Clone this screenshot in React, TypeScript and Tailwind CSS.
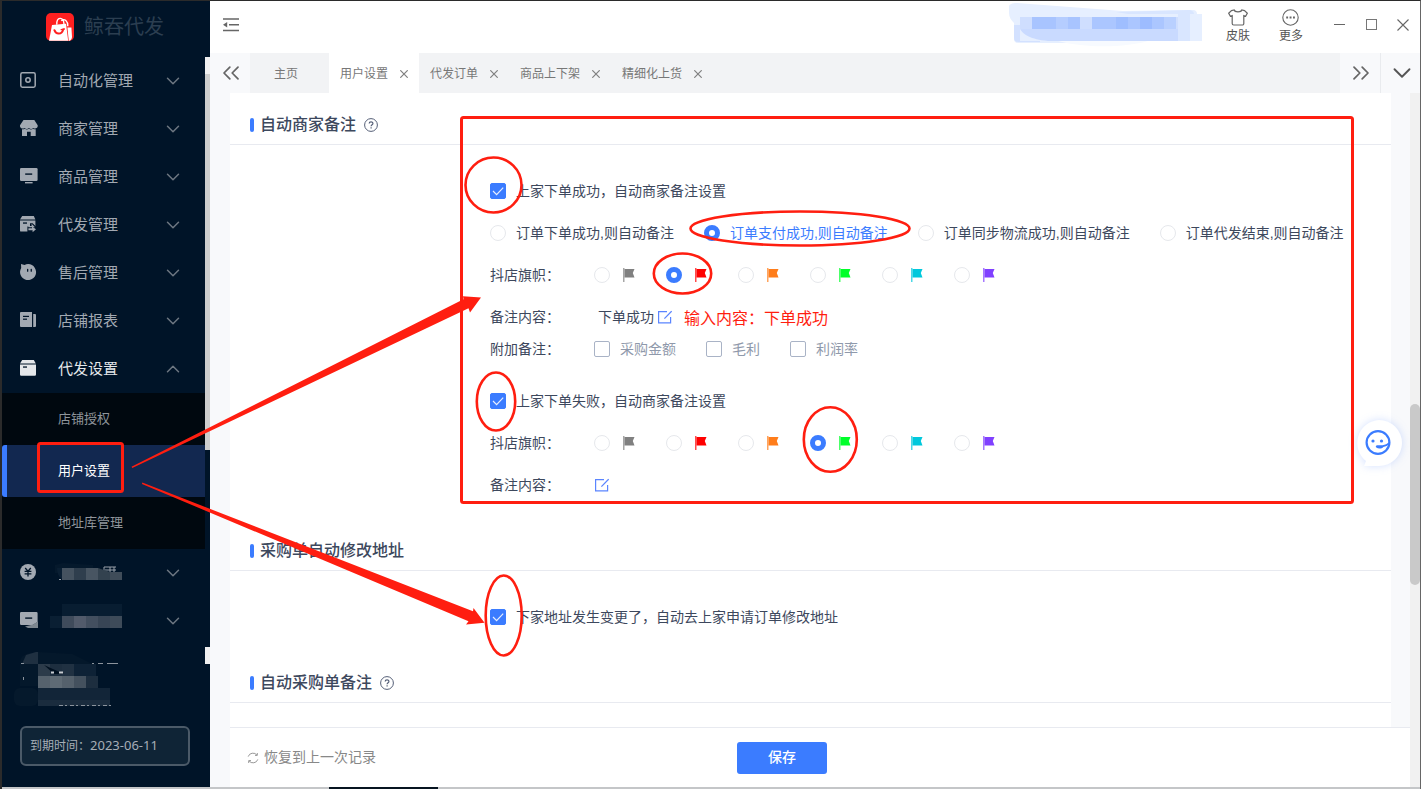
import React from "react";
import { ChevronDown, ChevronUp, ChevronsLeft, ChevronsRight } from "lucide-react";

const FLAGS = [
  { name: "灰", color: "#808080" },
  { name: "红", color: "#ff0000" },
  { name: "橙", color: "#ff7d1a" },
  { name: "绿", color: "#00ff2a" },
  { name: "青", color: "#00c8dc" },
  { name: "紫", color: "#8040ff" },
];

const TIMINGS = [
  "订单下单成功,则自动备注",
  "订单支付成功,则自动备注",
  "订单同步物流成功,则自动备注",
  "订单代发结束,则自动备注",
];

const EXTRAS = ["采购金额", "毛利", "利润率"];
const TABS = ["用户设置", "代发订单", "商品上下架", "精细化上货"];
const SUB_ITEMS = ["店铺授权", "用户设置", "地址库管理"];

/* ---------- sidebar icons ---------- */

function IconFrame({ children }: { children: React.ReactNode }) {
  return (
    <svg width="18" height="18" viewBox="0 0 18 18" className="shrink-0" fill="currentColor" aria-hidden="true">
      {children}
    </svg>
  );
}

const HOLE = "#001428";

const AutomationIcon = () => (
  <IconFrame>
    <rect x="0.8" y="0.8" width="14.4" height="14.4" rx="1.6" fill="none" stroke="currentColor" strokeWidth="1.5" />
    <circle cx="8" cy="8" r="2.2" fill="none" stroke="currentColor" strokeWidth="1.5" />
  </IconFrame>
);

const ShopIcon = () => (
  <IconFrame>
    <path d="M3.5 0h10.8l3.4 5.2v1.2a2.9 2.9 0 0 1-4.4 1.6 3.1 3.1 0 0 1-4.4 0 3.1 3.1 0 0 1-4.4 0A2.9 2.9 0 0 1 0 6.4V5.2z" />
    <path d="M2 9.2c1.1.3 2 .1 2.8-.4 1.4.8 2.8.8 4.1 0 1.4.8 2.8.8 4.2 0 .8.5 1.7.7 2.6.4V16h-5v-4.300H7V16H2z" />
  </IconFrame>
);

const GoodsIcon = () => (
  <IconFrame>
    <rect x="0" y="0" width="17.6" height="13" rx="1.2" />
    <rect x="5.2" y="5.4" width="7" height="1.4" fill={HOLE} />
    <rect x="5" y="14" width="7.6" height="1.4" />
  </IconFrame>
);

const BoxIcon = () => (
  <IconFrame>
    <path d="M2.2 0h11.6l2 3.400H0z" />
    <path d="M0 4.600h16v10a1.200 1.200 0 0 1-1.200 1.200H1.200A1.200 1.200 0 0 1 0 14.600z" />
    <rect x="3" y="6.4" width="4" height="1.3" fill={HOLE} />
  </IconFrame>
);

const ShipIcon = () => (
  <IconFrame>
    <path d="M2.2 0h11.6l1.6 3.400H0z" />
    <path d="M0 4.600h15.400v11H1.200A1.200 1.200 0 0 1 0 14.400z" />
    <rect x="3" y="6.4" width="4" height="1.3" fill={HOLE} />
    <path d="M7.400 10.400H10V7.200h2.600L16 10.500V16H7.400z" fill={HOLE} />
    <path d="M11.600 7.800L15 11.200H8.400V10h3.200z" />
    <path d="M8.400 12.200H12V10.600l4 2.600-3.400 3V14.200H8.400z" />
  </IconFrame>
);

const FaceIcon = () => (
  <IconFrame>
    <path d="M1 0l3.6.9A8 8 0 1 1 1.200 4z" />
    <rect x="7" y="4.8" width="1.3" height="3" rx="0.6" fill={HOLE} />
    <rect x="10.6" y="4.8" width="1.3" height="3" rx="0.6" fill={HOLE} />
  </IconFrame>
);

const ReportIcon = () => (
  <IconFrame>
    <path d="M1 0h11v15H1a1 1 0 0 1-1-1V1a1 1 0 0 1 1-1z" />
    <path d="M13.200 2H15a1 1 0 0 1 1 1v11a1 1 0 0 1-1 1h-1.800z" />
    <rect x="3" y="3.8" width="6" height="1.2" fill={HOLE} />
    <rect x="3" y="6.6" width="4" height="1.2" fill={HOLE} />
  </IconFrame>
);

const YuanIcon = () => (
  <IconFrame>
    <circle cx="8" cy="8" r="8" />
    <path d="M5.200 4l2.800 3.200L10.800 4M4.600 7.400h6.800M4.600 9.800h6.800M8 7.200V12.600" fill="none" stroke={HOLE} strokeWidth="1.3" />
  </IconFrame>
);

const MENU = [
  { label: "自动化管理", Icon: AutomationIcon },
  { label: "商家管理", Icon: ShopIcon },
  { label: "商品管理", Icon: GoodsIcon },
  { label: "代发管理", Icon: ShipIcon },
  { label: "售后管理", Icon: FaceIcon },
  { label: "店铺报表", Icon: ReportIcon },
];

/* ---------- small drawings ---------- */

function LogoMark() {
  return (
    <svg width="28" height="28" viewBox="0 0 28 28" aria-hidden="true">
      <rect width="28" height="28" rx="5" fill="#ff2020" />
      <path d="M6 12l14-1.200 2.200 17H3z" fill="#fff" />
      <path d="M21.400 14.500h4l.6 9.500a4.500 4.500 0 0 1-3.200 4z" fill="#fff" />
      <path d="M10.800 11.600c-.4-8 6.600-8.400 7.200-.6M15.200 7.600c3.400-2.600 6.800.4 6.600 5.600" fill="none" stroke="#fff" strokeWidth="1.4" />
      <path d="M8.400 17.200c1.600 4.600 7.400 4.600 8.800-.8" fill="none" stroke="#ff2020" strokeWidth="2" strokeLinecap="round" />
      <path d="M15.200 16.600l3.200-.6" stroke="#ff2020" strokeWidth="1.4" strokeLinecap="round" />
    </svg>
  );
}

function FlagIcon({ color }: { color: string }) {
  return (
    <svg width="12" height="14" viewBox="0 0 12 14" aria-hidden="true">
      <path d="M0 0h1.500v14H0z" fill={color} opacity="0.7" />
      <path d="M1.500 1H11.500L9.800 5l1.700 4.500H1.500z" fill={color} />
    </svg>
  );
}

function EditIcon() {
  return (
    <svg width="14" height="14" viewBox="0 0 14 14" fill="none" stroke="#5b85ff" strokeWidth="1.2" aria-hidden="true">
      <path d="M9 1.600H.6v11.300h12V7" />
      <path d="M6.400 8.600L13.600 1.200" />
    </svg>
  );
}

function HelpIcon() {
  return (
    <svg width="14" height="14" viewBox="0 0 14 14" fill="none" stroke="#555f77" aria-hidden="true">
      <circle cx="7" cy="7" r="6.4" strokeWidth="1" />
      <path d="M5.200 5.600c0-2.400 3.700-2.300 3.700-.2 0 1.300-1.800 1.400-1.800 2.900" strokeWidth="1.2" />
      <path d="M7.100 9.300v1.200" strokeWidth="1.2" />
    </svg>
  );
}

/* ---------- form controls ---------- */

type ChoiceProps = {
  id: string;
  label: string;
  checked?: boolean;
  textClass?: string;
};

function Check({ id, label, checked, textClass = "text-[#3d485d]" }: ChoiceProps) {
  return (
    <label htmlFor={id} className="flex items-center gap-[10px]">
      <span className="relative flex h-4 w-4 shrink-0">
        <input
          id={id}
          type="checkbox"
          defaultChecked={checked}
          className="peer h-4 w-4 appearance-none rounded-[2px] border border-[#a9b3c6] bg-white checked:border-[#3b7cff] checked:bg-[#3b7cff]"
        />
        <svg viewBox="0 0 16 16" className="pointer-events-none absolute inset-0 hidden h-4 w-4 peer-checked:block" aria-hidden="true">
          <path d="M3 8l3.600 3.600L13.200 4.600" fill="none" stroke="#e6eeff" strokeWidth="1.2" />
        </svg>
      </span>
      <span className={textClass}>{label}</span>
    </label>
  );
}

const RADIO =
  "h-4 w-4 shrink-0 appearance-none rounded-full border border-[#e6e8ec] bg-white checked:border-[5px] checked:border-[#3b7cff]";

function Row({ label, children }: { label: string; children: React.ReactNode }) {
  return (
    <div className="flex h-[42px] items-center">
      <span className="w-[104px] shrink-0">{label}</span>
      {children}
    </div>
  );
}

function FlagRow({ group, selected }: { group: string; selected: number }) {
  return (
    <Row label="抖店旗帜：">
      <div className="flex" role="radiogroup" aria-label="抖店旗帜">
        {FLAGS.map((f, i) => (
          <label key={f.name} className="flex w-[72px] items-center gap-[13px]">
            <input type="radio" name={group} aria-label={f.name} defaultChecked={i === selected} className={RADIO} />
            <FlagIcon color={f.color} />
          </label>
        ))}
      </div>
    </Row>
  );
}

function SectionHeader({ title, help }: { title: string; help?: boolean }) {
  return (
    <div className="flex h-[41px] shrink-0 items-center border-b border-[#e8eaf0] pt-px pl-5">
      <span className="h-[14px] w-1 rounded-[2px] bg-[#3b7cff]" />
      <h2 className="ml-[6px] text-[16px] leading-6 font-medium text-[#3d485d]">{title}</h2>
      {help && (
        <button type="button" aria-label={title + "说明"} className="ml-2">
          <HelpIcon />
        </button>
      )}
    </div>
  );
}

/* ---------- sidebar ---------- */

function Chevron({ up }: { up?: boolean }) {
  const C = up ? ChevronUp : ChevronDown;
  return <C size={22} strokeWidth={1.6} className="ml-auto text-[#6d7782]" />;
}

const ITEM = "flex h-12 w-full shrink-0 items-center pl-[18px] pr-[21px] text-[15px] text-[#a2a9b2]";

function Sidebar() {
  return (
    <aside className="flex w-52 shrink-0 flex-col bg-[#001428]">
      <div className="flex h-14 shrink-0 items-center justify-center gap-[10px] pr-[2px] pb-1">
        <LogoMark />
        <span className="text-[20px] text-[#2b3e50]">鲸吞代发</span>
      </div>
      <div className="flex min-h-0 flex-1">
        <nav className="flex min-w-0 flex-1 flex-col">
          {MENU.map(({ label, Icon }) => (
            <button key={label} type="button" className={ITEM}>
              <Icon />
              <span className="ml-5">{label}</span>
              <Chevron />
            </button>
          ))}
          <button type="button" className="flex h-12 w-full shrink-0 items-center pl-[18px] pr-[21px] text-[15px] text-[#e4e7ea]">
            <BoxIcon />
            <span className="ml-5">代发设置</span>
            <Chevron up />
          </button>
          <div className="flex shrink-0 flex-col bg-[#00080f] text-[13px]">
            {SUB_ITEMS.map((s) => (
              <a
                key={s}
                href="#"
                className={
                  s === "用户设置"
                    ? "flex h-[52px] items-center rounded-l-[3px] border-l-[5px] border-[#3b7cff] bg-[#122850] pl-[51px] text-white"
                    : "flex h-[52px] items-center pl-14 text-[#8f959b]"
                }
              >
                {s}
              </a>
            ))}
          </div>
          <button type="button" aria-label="菜单" className={ITEM}>
            <YuanIcon />
            <svg width="72" height="24" viewBox="0 0 72 24" className="ml-3" aria-hidden="true">
              <path d="M5 4l8-2 30 2v8H5z" fill="#05192c" />
              <path d="M54 6h12M55 9h11M60 6v5M64 6v5M54 6v4" stroke="#9aa1aa" strokeWidth="1" fill="none" />
              <path d="M7 7h5v11c-3-2-5-6-5-11z" fill="#0a1f33" />
              <rect x="12" y="7" width="12" height="12" fill="#45525f" />
              <rect x="24" y="7" width="12" height="12" fill="#2f3e4d" />
              <rect x="36" y="7" width="12" height="12" fill="#485562" />
              <path d="M48 7l12 4v8H48z" fill="#33424f" />
              <path d="M60 11h12v8H60z" fill="#3f4c59" />
              <rect x="9" y="18" width="2" height="1" fill="#9aa1aa" />
            </svg>
            <Chevron />
          </button>
          <button type="button" aria-label="菜单" className={ITEM}>
            <IconFrame>
              <path d="M1.200 0h15.200a1.200 1.200 0 0 1 1.200 1.200V10l-5 3H1.200A1.200 1.200 0 0 1 0 11.800V1.200A1.200 1.200 0 0 1 1.200 0z" />
              <rect x="5.200" y="5.4" width="7" height="1.4" fill={HOLE} />
              <path d="M18 9.500V16H8l-3-1.500 8-2z" fill="#7d8790" />
            </IconFrame>
            <svg width="72" height="34" viewBox="0 0 72 34" className="ml-3" aria-hidden="true">
              <rect x="12" width="60" height="12" fill="#081d31" />
              <rect y="12" width="12" height="12" fill="#0a1f33" />
              <rect x="12" y="12" width="12" height="12" fill="#3f4b5b" />
              <rect x="24" y="12" width="12" height="12" fill="#525b6b" />
              <rect x="36" y="12" width="12" height="12" fill="#434f5f" />
              <rect x="48" y="12" width="12" height="12" fill="#384555" />
              <rect x="60" y="12" width="12" height="12" fill="#3e4b59" />
            </svg>
            <Chevron />
          </button>
          <svg width="124" height="62" viewBox="0 0 124 62" className="shrink-0" aria-hidden="true">
            <path d="M18 18c0-8 6-10 18-11l34 2 24 12v20H18z" fill="#04182b" />
            <path d="M24 10l10-3 2 0v12H20z" fill="#1f3041" />
            <rect x="36" y="19" width="12" height="12" fill="#2c3b4a" />
            <rect x="48" y="19" width="12" height="12" fill="#1d2e3f" />
            <rect x="60" y="19" width="12" height="12" fill="#203142" />
            <rect x="72" y="19" width="22" height="12" fill="#0e2236" />
            <rect x="36" y="31" width="12" height="12" fill="#56626d" />
            <rect x="48" y="31" width="12" height="12" fill="#5f6b75" />
            <rect x="60" y="31" width="12" height="12" fill="#55616c" />
            <rect x="72" y="31" width="12" height="12" fill="#44515e" />
            <rect x="84" y="31" width="12" height="12" fill="#1d2e3f" />
            <rect x="12" y="43" width="24" height="18" rx="6" fill="#05192c" />
            <rect x="36" y="43" width="72" height="12" fill="#122538" />
            <rect x="36" y="55" width="72" height="6" fill="#1a2c3e" />
            <path d="M42 20l20 9-10 0z" fill="#001020" />
            <path d="M57 60.500h52" stroke="#8c949d" strokeDasharray="4 2 2 3" />
            <path d="M90 18.500h2M96 18.500h5M105 18.500h11" stroke="#8c949d" />
            <path d="M49 27.500h3M57 27.500h4" stroke="#c7ccd1" strokeWidth="2" />
            <path d="M21.500 32v3M19 18.500h3" stroke="#8c949d" />
          </svg>
        </nav>
        <div className="flex w-[5px] shrink-0 flex-col">
          <span className="h-[17px] bg-[#f0f0f0]" />
          <span className="h-[376px] bg-[#cdcdcd]" />
          <span className="flex-1" />
          <span className="h-[17px] bg-[#f0f0f0]" />
        </div>
      </div>
      <div className="mt-[62px] mr-5 mb-[21px] ml-[18px] flex h-10 shrink-0 items-center rounded-[6px] border-2 border-[#4b5a68] bg-[#0f2436] pl-2 text-[12px] text-[#a7aeb6]">
        <span>到期时间：</span>
        <span className="font-['Noto_Sans',sans-serif] text-[13px]">2023-06-11</span>
      </div>
    </aside>
  );
}

/* ---------- top bars ---------- */

function AccountBlur() {
  return (
    <svg width="194" height="48" viewBox="0 0 194 48" aria-hidden="true">
      <path d="M1 6c0-3 3-4 8-4l106 8 70-1c3 0 4 2 4 4h5v27H80l-20 2-30 0H10c-3 0-4-2-4-4V22c-3-3-5-6-5-10z" fill="#e6efff" />
      <path d="M6 24h6v16h20v1H10c-3 0-4-2-4-4z" fill="#d3e1ff" />
      <path d="M108 11l72-2c4 0 6 2 6 4H120z" fill="#d9e6ff" />
      <rect x="12" y="16" width="170" height="12" fill="#cfdefe" />
      <path d="M12 28h158v12H40c-18-2-24-6-28-12z" fill="#c9daff" />
      <rect x="24" y="16" width="48" height="12" fill="#a8c4ff" />
      <rect x="48" y="16" width="12" height="12" fill="#b5cdff" />
      <rect x="84" y="16" width="84" height="12" fill="#abc6ff" />
      <rect x="108" y="16" width="12" height="12" fill="#9fbeff" />
      <rect x="132" y="16" width="12" height="12" fill="#9dbcff" />
      <rect x="156" y="16" width="12" height="12" fill="#b9d0ff" />
      <rect x="170" y="13" width="12" height="27" fill="#d9e6ff" />
      <path d="M50 40h90c-20 6-60 8-90 0z" fill="#f7faff" />
    </svg>
  );
}

function TopBar() {
  return (
    <header className="flex h-[52px] shrink-0 items-center bg-white pr-[11px] pb-[2px] pl-[13px] text-[12px] text-[#555]">
      <button type="button" aria-label="收起菜单" className="mb-[2px]">
        <svg width="16" height="14" viewBox="0 0 16 14" fill="none" stroke="#666" strokeWidth="1.5" aria-hidden="true">
          <path d="M0 1h16M6 6.800h10M0 12.600h16" />
          <path d="M4.200 4v5.600L0 6.800z" fill="#666" stroke="none" />
        </svg>
      </button>
      <span className="ml-auto self-start">
        <AccountBlur />
      </span>
      <button type="button" className="ml-6 flex flex-col items-center gap-[2px]">
        <svg width="20" height="17" viewBox="0 0 20 17" fill="none" stroke="#666" strokeWidth="1.2" aria-hidden="true">
          <path d="M6.200 1C6.800 3.400 13.200 3.400 13.800 1L16.500 1.600 19.300 4.200 17.600 7.200 15.800 6.600V14.500a1.500 1.500 0 0 1-1.500 1.500H5.700A1.500 1.500 0 0 1 4.200 14.500V6.600L2.400 7.200.7 4.200 3.500 1.600z" />
        </svg>
        <span className="leading-4">皮肤</span>
      </button>
      <button type="button" className="ml-[29px] flex flex-col items-center gap-[2px]">
        <svg width="17" height="17" viewBox="0 0 17 17" fill="none" stroke="#666" aria-hidden="true">
          <circle cx="8.5" cy="8.5" r="7.7" strokeWidth="1.1" />
          <path d="M4.200 8.500h1.900M7.600 8.500h1.900M11 8.500h1.900" strokeWidth="1.8" />
        </svg>
        <span className="leading-4">更多</span>
      </button>
      <button type="button" aria-label="最小化" className="mb-[2px] ml-[31px]">
        <svg width="11" height="12" viewBox="0 0 11 12" aria-hidden="true">
          <path d="M0 5.500h11" stroke="#666" />
        </svg>
      </button>
      <button type="button" aria-label="最大化" className="mb-[2px] ml-[21px]">
        <svg width="11" height="12" viewBox="0 0 11 12" fill="none" aria-hidden="true">
          <rect x="0.5" y="0.5" width="10" height="10" stroke="#777" />
        </svg>
      </button>
      <button type="button" aria-label="关闭" className="mb-[2px] ml-5">
        <svg width="12" height="12" viewBox="0 0 12 12" aria-hidden="true">
          <path d="M0.500 0.500l11 11M11.500 0.500l-11 11" stroke="#666" strokeWidth="1.1" />
        </svg>
      </button>
    </header>
  );
}

function TabBar() {
  return (
    <div className="flex h-10 shrink-0 bg-[#f2f3f5] text-[12px] text-[#777]">
      <button type="button" aria-label="向左" className="flex w-10 items-center justify-center bg-[#f8f9fb] pl-[2px] text-[#666]">
        <ChevronsLeft size={28} strokeWidth={1.5} />
      </button>
      <button type="button" className="w-[79px] pt-[2px] pr-[7px]">主页</button>
      {TABS.map((t) => (
        <div
          key={t}
          className={
            t === "用户设置"
              ? "flex items-center gap-3 bg-white px-[11px] pt-[2px]"
              : "flex items-center gap-3 px-[11px] pt-[2px]"
          }
        >
          <button type="button">{t}</button>
          <button type="button" aria-label={"关闭" + t} className="w-2">
            <svg width="8" height="8" viewBox="0 0 8 8" aria-hidden="true">
              <path d="M0.300 0.300l7.400 7.400M7.700 0.300l-7.400 7.400" stroke="#808080" strokeWidth="1.2" />
            </svg>
          </button>
        </div>
      ))}
      <button type="button" aria-label="向右" className="ml-auto flex w-10 items-center justify-center bg-[#f8f9fb] pl-[2px] text-[#666]">
        <ChevronsRight size={28} strokeWidth={1.5} />
      </button>
      <button type="button" aria-label="全部标签" className="flex w-10 items-center justify-center border-l border-[#e9ebee] bg-[#f8f9fb] pl-[2px] text-[#555]">
        <ChevronDown size={30} strokeWidth={1.5} />
      </button>
    </div>
  );
}

/* ---------- page ---------- */

function Settings() {
  return (
    <div className="flex min-h-0 flex-1 flex-col overflow-hidden bg-white pt-[11px] text-[14px] text-[#3d485d]">
      <SectionHeader title="自动商家备注" help />
      <div className="shrink-0 pt-[25px] pb-6 pl-[260px]">
        <div className="flex h-[42px] items-center">
          <Check id="order-ok" label="上家下单成功，自动商家备注设置" checked />
        </div>
        <div className="flex h-[42px] items-center gap-[30px] whitespace-nowrap" role="radiogroup" aria-label="备注时机">
          {TIMINGS.map((t, i) => (
            <label key={t} className="flex items-center gap-[10px]">
              <input type="radio" name="timing" defaultChecked={i === 1} className={RADIO} />
              <span className={i === 1 ? "text-[#3b7cff]" : ""}>{t}</span>
            </label>
          ))}
        </div>
        <FlagRow group="flag-ok" selected={1} />
        <Row label="备注内容：">
          <span className="ml-1">下单成功</span>
          <button type="button" aria-label="编辑备注" className="ml-1">
            <EditIcon />
          </button>
          <span className="ml-3 pt-[3px] text-[16px] text-[#ff1e10]">输入内容：下单成功</span>
        </Row>
        <div className="mb-5 flex h-[22px] items-center">
          <span className="w-[104px] shrink-0">附加备注：</span>
          <div className="flex gap-[30px]">
            {EXTRAS.map((e, i) => (
              <Check key={e} id={"extra-" + i} label={e} textClass="text-[#8f99ab]" />
            ))}
          </div>
        </div>
        <div className="flex h-[42px] items-center">
          <Check id="order-fail" label="上家下单失败，自动商家备注设置" checked />
        </div>
        <FlagRow group="flag-fail" selected={3} />
        <Row label="备注内容：">
          <button type="button" aria-label="编辑备注" className="ml-px">
            <EditIcon />
          </button>
        </Row>
      </div>
      <SectionHeader title="采购单自动修改地址" />
      <div className="shrink-0 pt-[25px] pb-6 pl-[260px]">
        <div className="flex h-[42px] items-center">
          <Check id="address-sync" label="下家地址发生变更了，自动去上家申请订单修改地址" checked />
        </div>
      </div>
      <SectionHeader title="自动采购单备注" help />
    </div>
  );
}

function SupportBubble() {
  return (
    <button type="button" aria-label="客服" className="absolute top-[411px] right-[10px]">
      <svg width="62" height="62" viewBox="0 0 62 62" className="drop-shadow-[0_0_4px_rgba(80,130,255,0.25)]" aria-hidden="true">
        <path d="M31 8a23 23 0 1 1 0 46H16l2-5A23 23 0 0 1 31 8z" fill="#fff" />
        <circle cx="30" cy="30.5" r="11.4" fill="none" stroke="#3b7cff" strokeWidth="2.2" />
        <circle cx="25" cy="29" r="1.6" fill="#3b7cff" />
        <circle cx="33.500" cy="29" r="1.6" fill="#3b7cff" />
        <path d="M28.400 33.400c2-.6 4 .2 6.200-.2 2.600-.5 4.600-1 6.400-3.200l.6 1.600c-2 2.400-4 3-6.200 3.400-1.600 1.900-5.400 1.900-7 .6-.7-.6-.8-1.900 0-2.200z" fill="#3b7cff" />
      </svg>
    </button>
  );
}

function Annotations() {
  return (
    <svg width="1421" height="789" viewBox="0 0 1421 789" className="pointer-events-none absolute -top-px -left-[2px] max-w-none" fill="none" stroke="#ff1e10" strokeWidth="3" aria-hidden="true">
      <rect x="38.5" y="443.5" width="84" height="48" rx="2" />
      <rect x="461.5" y="117.5" width="891" height="385" rx="2" />
      <g strokeWidth="2.6">
        <ellipse cx="493.5" cy="185" rx="28" ry="27.5" />
        <ellipse cx="800" cy="228.5" rx="109.5" ry="17" />
        <ellipse cx="682.5" cy="273.5" rx="28.7" ry="20" />
        <ellipse cx="496" cy="401.5" rx="19.2" ry="29" />
        <ellipse cx="830.3" cy="439.5" rx="26.5" ry="32.3" />
        <ellipse cx="503.7" cy="615.5" rx="18" ry="40" />
      </g>
      <g fill="#ff1e10" stroke="none">
        <path d="M131.500 466.800L463.500 299.300 463 296.300 481 297.500 470 312.500 468.500 308.300 132.300 468z" />
        <path d="M142.300 482.500L473 611.300 473.500 608 484.500 622.700 466 624.500 468.500 621.300 142 484z" />
      </g>
    </svg>
  );
}

export default function App() {
  return (
    <div className="relative flex h-screen flex-col overflow-hidden border-t border-r border-l-2 border-t-[#2b2b2b] border-r-[#666] border-l-[#2b2b2b] bg-white font-['Liberation_Sans','Noto_Sans_CJK_SC',sans-serif]">
      <div className="flex min-h-0 flex-1">
        <Sidebar />
        <div className="flex min-w-0 flex-1 flex-col">
          <TopBar />
          <TabBar />
          <div className="flex min-h-0 flex-1 bg-[#f8f9fb]">
            <main className="flex min-w-0 flex-1 flex-col pl-5">
              <div className="flex min-h-0 flex-1 pr-[19px]">
                <Settings />
              </div>
              <footer className="grid h-[60px] shrink-0 grid-cols-[1fr_auto_1fr] items-center border-t border-[#e8eaf0] bg-white pr-[93px] pl-[17px] text-[14px]">
                <button type="button" className="flex items-center gap-[5px] justify-self-start text-[#888]">
                  <svg width="12" height="12" viewBox="0 0 12 12" fill="none" stroke="#999" aria-hidden="true">
                    <path d="M1.200 4.600A5 5 0 0 1 10 3.200M10.800 7.400A5 5 0 0 1 2 8.800" />
                    <path d="M10.300 1v2.400H8M1.700 11V8.600H4" />
                  </svg>
                  恢复到上一次记录
                </button>
                <button type="button" className="h-8 w-[90px] rounded-[3px] bg-[#3b7cff] font-medium text-white">
                  保存
                </button>
              </footer>
            </main>
            <div className="flex w-[10px] shrink-0 flex-col bg-[#f1f1f1] pt-[311px]">
              <span className="h-[181px] rounded-[5px] bg-[#c9c9c9]" />
            </div>
          </div>
        </div>
      </div>
      <div className="flex h-[2px] shrink-0 bg-[#c4c6c8]">
        <span className="ml-[327px] w-[109px] bg-[#061420]" />
      </div>
      <SupportBubble />
      <Annotations />
    </div>
  );
}
